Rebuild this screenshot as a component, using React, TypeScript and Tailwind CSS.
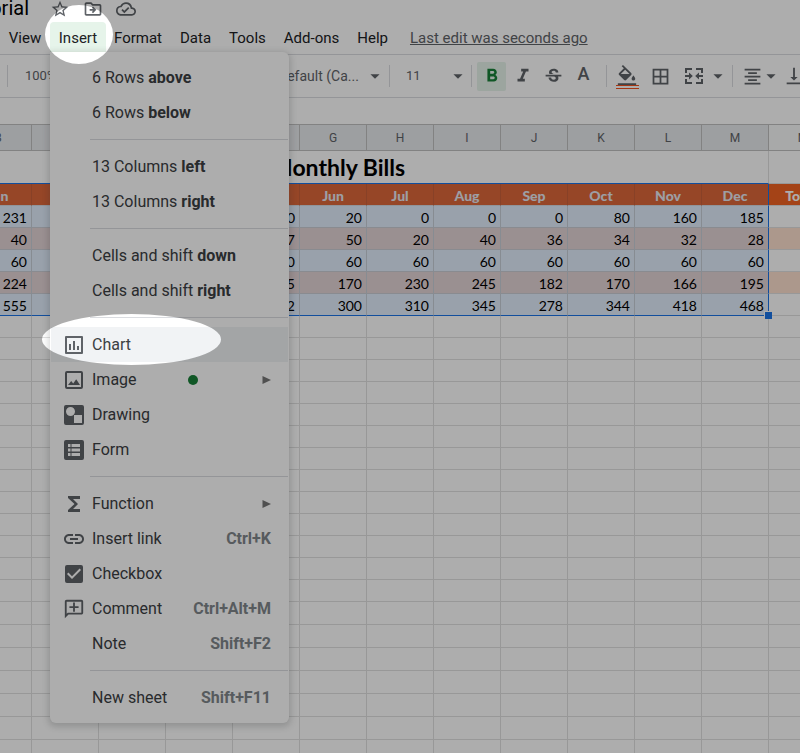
import type { ReactNode } from "react";
import {
  MdArrowDropDown,
  MdBorderAll,
  MdCheckBox,
  MdFormatAlignCenter,
  MdFormatBold,
  MdFormatColorFill,
  MdFormatItalic,
  MdFunctions,
  MdLink,
  MdOutlineAddComment,
  MdOutlineCloudDone,
  MdOutlineDriveFileMove,
  MdStarBorder,
  MdStrikethroughS,
  MdVerticalAlignBottom,
} from "react-icons/md";

/* ---------- icons ---------- */

function ChartIcon() {
  return (
    <svg viewBox="0 0 24 24" className="size-6" fill="currentColor" aria-hidden="true">
      <path
        fillRule="evenodd"
        d="M4 3h16a1 1 0 0 1 1 1v16a1 1 0 0 1-1 1H4a1 1 0 0 1-1-1V4a1 1 0 0 1 1-1zm1 2v14h14V5z"
      />
      <path d="M7 11h2v6H7zM11 8h2v9h-2zM15 13h2v4h-2z" />
    </svg>
  );
}

function ImageIcon() {
  return (
    <svg viewBox="0 0 24 24" className="size-6" fill="currentColor" aria-hidden="true">
      <path
        fillRule="evenodd"
        d="M5 3h14a2 2 0 0 1 2 2v14a2 2 0 0 1-2 2H5a2 2 0 0 1-2-2V5a2 2 0 0 1 2-2zm0 2v14h14V5z"
      />
      <path d="M6 17l3.200-4 2 2.400 3-4.200L18 17z" />
    </svg>
  );
}

function DrawingIcon() {
  return (
    <svg viewBox="0 0 24 24" className="size-6" fill="currentColor" aria-hidden="true">
      <path
        fillRule="evenodd"
        d="M4 2h16a2 2 0 0 1 2 2v16a2 2 0 0 1-2 2H4a2 2 0 0 1-2-2V4a2 2 0 0 1 2-2zM8.500 4a4.500 4.500 0 1 0 0 9 4.500 4.500 0 0 0 0-9zM12 12v8h8v-8z"
      />
    </svg>
  );
}

function FormIcon() {
  return (
    <svg viewBox="0 0 24 24" className="size-6" fill="currentColor" aria-hidden="true">
      <path
        fillRule="evenodd"
        d="M4 2h16a2 2 0 0 1 2 2v16a2 2 0 0 1-2 2H4a2 2 0 0 1-2-2V4a2 2 0 0 1 2-2zM6 6v3h2.500V6zM9.500 6v3H18V6zM6 10.500v3h2.500v-3zM9.500 10.500v3H18v-3zM6 15v3h2.500v-3zM9.500 15v3H18v-3z"
      />
    </svg>
  );
}

function MergeIcon() {
  return (
    <svg viewBox="0 0 20 18" className="h-[18px] w-5" fill="currentColor" aria-hidden="true">
      <path d="M1 1h7v2H3v3H1zM12 1h7v5h-2V3h-5zM1 12h2v3h5v2H1zM17 12h2v5h-7v-2h5z" />
      <path d="M1 8h4V5.500L8.800 9 5 12.500V10H1zM19 8h-4V5.500L11.200 9l3.800 3.500V10h4z" />
    </svg>
  );
}

/* ---------- toolbar ---------- */

function Divider({ className = "" }: { className?: string }) {
  return <span className={`h-[22px] w-px shrink-0 bg-[#dadce0] ${className}`} />;
}

function ToolButton({
  label,
  active,
  className = "",
  children,
}: {
  label: string;
  active?: boolean;
  className?: string;
  children: ReactNode;
}) {
  return (
    <button
      type="button"
      aria-label={label}
      aria-pressed={active}
      className={`flex h-[29px] shrink-0 items-center justify-center rounded-xs ${
        active ? "bg-[#e6f4ea] text-[#188038]" : ""
      } ${className}`}
    >
      {children}
    </button>
  );
}

function Picker({
  label,
  value,
  className = "",
  textClass,
}: {
  label: string;
  value: string;
  className?: string;
  textClass: string;
}) {
  return (
    <label className={`grid shrink-0 items-center ${className}`}>
      <select
        aria-label={label}
        defaultValue={value}
        className={`col-start-1 row-start-1 h-7 w-full appearance-none bg-transparent ${textClass}`}
      >
        <option>{value}</option>
      </select>
      <MdArrowDropDown className="pointer-events-none col-start-1 row-start-1 -mr-1 size-[22px] justify-self-end" />
    </label>
  );
}

function Toolbar() {
  return (
    <div className="flex h-11 items-center overflow-hidden border-y border-[#dadce0] pl-[7px] text-[#5f6368]">
      <Divider />
      <Picker label="Zoom" value="100%" className="ml-[17px] w-[50px]" textClass="text-[13px]" />
      <Picker label="Font" value="Default (Ca..." className="ml-[203px] w-[104px]" textClass="text-sm" />
      <Divider className="ml-[7px]" />
      <Picker label="Font size" value="11" className="ml-4 w-[59px]" textClass="text-[13px]" />
      <Divider className="ml-[6px]" />
      <ToolButton label="Bold" active className="ml-[5px] w-[29px]">
        <MdFormatBold className="size-[22px]" />
      </ToolButton>
      <ToolButton label="Italic" className="ml-[2px] w-[30px]">
        <MdFormatItalic className="size-[22px]" />
      </ToolButton>
      <ToolButton label="Strikethrough" className="w-[30px]">
        <MdStrikethroughS className="size-[21px]" />
      </ToolButton>
      <ToolButton label="Text color" className="w-[31px]">
        <span className="pb-1 text-lg leading-5 font-medium">A</span>
      </ToolButton>
      <Divider className="ml-[7px]" />
      <ToolButton label="Fill color" className="ml-[5px] w-[30px] flex-col">
        <MdFormatColorFill className="h-[21px] w-[22px]" viewBox="0 0 24 21" />
        <span className="h-1 w-[23px] border-y border-[#f4511e]" />
      </ToolButton>
      <ToolButton label="Borders" className="ml-[3px] w-[30px]">
        <MdBorderAll className="size-[21px]" />
      </ToolButton>
      <ToolButton label="Merge cells" className="ml-1 w-[30px]">
        <MergeIcon />
      </ToolButton>
      <ToolButton label="Merge options" className="ml-[1px] w-4">
        <MdArrowDropDown className="size-[22px] shrink-0" />
      </ToolButton>
      <Divider className="ml-[6px]" />
      <ToolButton label="Horizontal align" className="ml-1 w-[30px]">
        <MdFormatAlignCenter className="size-[21px]" />
      </ToolButton>
      <ToolButton label="Align options" className="-ml-1 w-4">
        <MdArrowDropDown className="size-[22px] shrink-0" />
      </ToolButton>
      <ToolButton label="Vertical align" className="w-[30px]">
        <MdVerticalAlignBottom className="size-[22px]" />
      </ToolButton>
    </div>
  );
}

/* ---------- insert menu ---------- */

type Item = {
  text: string;
  strong?: string;
  icon?: ReactNode;
  keys?: string;
  submenu?: boolean;
  dot?: boolean;
  active?: boolean;
};

const groups: Item[][] = [
  [
    { text: "6 Rows ", strong: "above" },
    { text: "6 Rows ", strong: "below" },
  ],
  [
    { text: "13 Columns ", strong: "left" },
    { text: "13 Columns ", strong: "right" },
  ],
  [
    { text: "Cells and shift ", strong: "down" },
    { text: "Cells and shift ", strong: "right" },
  ],
  [
    { text: "Chart", icon: <ChartIcon />, active: true },
    { text: "Image", icon: <ImageIcon />, submenu: true, dot: true },
    { text: "Drawing", icon: <DrawingIcon /> },
    { text: "Form", icon: <FormIcon /> },
  ],
  [
    { text: "Function", icon: <MdFunctions className="size-6" />, submenu: true },
    { text: "Insert link", icon: <MdLink className="size-6" />, keys: "Ctrl+K" },
    { text: "Checkbox", icon: <MdCheckBox className="size-6" /> },
    {
      text: "Comment",
      icon: <MdOutlineAddComment className="size-[22px] -scale-x-100" />,
      keys: "Ctrl+Alt+M",
    },
    { text: "Note", keys: "Shift+F2" },
  ],
  [{ text: "New sheet", keys: "Shift+F11" }],
];

function MenuItem({ item }: { item: Item }) {
  return (
    <button
      type="button"
      role="menuitem"
      className={`flex h-[35px] w-full items-center gap-1.5 pr-[17px] pl-[11px] text-left ${
        item.active ? "bg-[#f1f3f5]" : ""
      }`}
    >
      <span className="flex w-6 shrink-0 justify-center text-[#5f6368]">{item.icon}</span>
      <span className={item.dot ? "w-[90px]" : ""}>
        {item.text}
        {item.strong && <b className="font-bold">{item.strong}</b>}
      </span>
      {item.dot && <span className="size-2.5 rounded-full bg-[#188038]" />}
      {item.keys && <span className="ml-auto font-bold text-[#80868b]">{item.keys}</span>}
      {item.submenu && (
        <svg viewBox="0 0 9 8" className="ml-auto h-2 w-[9px]" fill="#777" aria-hidden="true">
          <path d="M0.500 0L9 4 0.500 8z" />
        </svg>
      )}
    </button>
  );
}

function InsertMenu() {
  return (
    <div
      role="menu"
      aria-label="Insert"
      className="absolute top-full left-0 z-10 w-[239px] rounded-b-md rounded-tr-md bg-white px-px py-2 text-base text-[#3c4043] shadow-[0_2px_6px_2px_rgba(60,64,67,0.2)]"
    >
      {groups.map((group, i) => (
        <div key={i}>
          {i > 0 && <div role="separator" className="my-[9px] ml-[39px] h-px bg-[#dadce0]" />}
          {group.map((item) => (
            <MenuItem key={item.text + (item.strong ?? "")} item={item} />
          ))}
        </div>
      ))}
    </div>
  );
}

/* ---------- header ---------- */

function Header() {
  return (
    <header>
      <div className="flex h-[22px] items-start">
        <div className="flex w-[29px] shrink-0 justify-end overflow-hidden text-xl leading-4">
          <h1 className="-mt-px h-5 leading-[18px]">Tutorial</h1>
        </div>
        <div className="ml-[21px] flex items-center gap-[13px] text-[#5f6368]">
          <button type="button" aria-label="Star" className="-mt-px">
            <MdStarBorder className="size-5" />
          </button>
          <button type="button" aria-label="Move" className="-mt-px">
            <MdOutlineDriveFileMove className="size-5" />
          </button>
          <button type="button" aria-label="Document status" className="-mt-px">
            <MdOutlineCloudDone className="size-5" />
          </button>
        </div>
      </div>
      <nav className="mb-0.5 flex h-[30px] items-stretch text-[15px] whitespace-nowrap text-[#202124]">
        <button type="button" className="w-[50px] pt-0.5">View</button>
        <div className="relative flex w-14">
          <button
            type="button"
            aria-haspopup="menu"
            aria-expanded="true"
            className="w-full rounded-t-sm bg-[#e6f4ea] pt-0.5"
          >
            Insert
          </button>
          <InsertMenu />
        </div>
        <div className="flex gap-0.5 pt-0.5">
          <button type="button" className="px-2">Format</button>
          <button type="button" className="px-2">Data</button>
          <button type="button" className="px-2">Tools</button>
          <button type="button" className="px-2">Add-ons</button>
          <button type="button" className="px-2">Help</button>
          <a href="#history" className="ml-3 self-center text-[#5f6368] underline">
            Last edit was seconds ago
          </a>
        </div>
      </nav>
    </header>
  );
}

/* ---------- sheet ---------- */

const columns = ["B", "C", "D", "E", "F", "G", "H", "I", "J", "K", "L", "M", "N"];
const months = ["Jan", "", "", "", "", "Jun", "Jul", "Aug", "Sep", "Oct", "Nov", "Dec"];
const bills: (number | string)[][] = [
  [231, "", "", "", 0, 20, 0, 0, 0, 80, 160, 185],
  [40, "", "", "", 37, 50, 20, 40, 36, 34, 32, 28],
  [60, "", "", "", 60, 60, 60, 60, 60, 60, 60, 60],
  [224, "", "", "", 195, 170, 230, 245, 182, 170, 166, 195],
  [555, "", "", "", 292, 300, 310, 345, 278, 344, 418, 468],
];
const emptyRows = Array.from({ length: 20 }, (_, i) => (i < 13 ? "h-[22px]" : "h-[23px]"));

function Sheet() {
  return (
    <main className="overflow-hidden pt-[26px]">
      <table className="-ml-[35px] w-[871px] table-fixed border-separate border-spacing-0 font-[Lato,Carlito,sans-serif] text-sm leading-[19px]">
        <thead>
          <tr className="h-[27px] font-[Roboto,sans-serif] text-xs text-[#5f6368]">
            {columns.map((c) => (
              <th
                key={c}
                scope="col"
                className={`border-y border-r border-[#c0c0c0] p-0 font-normal ${c === "N" ? "bg-[#f8f9fa]" : "bg-[#e8eaed]"}`}
              >
                {c}
              </th>
            ))}
          </tr>
        </thead>
        <tbody>
          <tr className="h-[33px]">
            <td
              colSpan={12}
              className="border-r border-b border-r-[#e0e0e0] border-b-[#1a73e8] p-0 pl-[306px] text-[23px] leading-6 font-bold text-black"
            >
              Monthly Bills
            </td>
            <td className="border-b border-[#e0e0e0] p-0" />
          </tr>
          <tr className="h-[22px] text-white">
            {months.map((m, c) => (
              <th
                key={c}
                scope="col"
                className={`border-r border-b border-b-[#d5dae2] bg-[#dd673a] p-0 pt-0.5 font-black text-[#e8eaf2] ${
                  c === 11 ? "border-r-[#1a73e8]" : "border-r-[#c9603a]"
                }`}
              >
                {m}
              </th>
            ))}
            <td className="border-b border-[#e0e0e0] bg-[#f26422] p-0 pt-0.5 pr-1 text-center font-black">Total</td>
          </tr>
          {bills.map((row, r) => {
            const last = r === bills.length - 1;
            return (
              <tr key={r} className="h-[22px]">
                {row.map((v, c) => (
                  <td
                    key={c}
                    className={`relative border-r border-b p-0 pt-0.5 pr-1 text-right text-black ${
                      r % 2 ? "bg-[#e4d4d6]" : "bg-[#e2eefd]"
                    } ${c === 11 ? "border-r-[#1a73e8]" : "border-r-[#c8ced8]"} ${
                      last ? "border-b-[#1a73e8]" : "border-b-[#cbcdd5]"
                    }`}
                  >
                    {v}
                    {last && c === 11 && (
                      <span className="absolute -right-1 -bottom-1 size-2 border-t border-l border-white bg-[#1a73e8]" />
                    )}
                  </td>
                ))}
                <td className={`border-b border-[#e0e0e0] p-0 ${r % 2 ? "bg-[#fee0cf]" : ""}`} />
              </tr>
            );
          })}
          {emptyRows.map((height, r) => (
            <tr key={r} className={height}>
              {columns.map((c) => (
                <td key={c} className="border-r border-b border-[#e0e0e0] p-0" />
              ))}
            </tr>
          ))}
        </tbody>
      </table>
    </main>
  );
}

/* Dimmed layer with two clear ellipses around the Insert menu and its Chart item. */
function Spotlight() {
  return (
    <svg className="pointer-events-none absolute inset-0 z-20 size-full" aria-hidden="true">
      <path
        fill="#000"
        fillOpacity="0.32"
        fillRule="evenodd"
        d="M0 0H6000V6000H0zM45 34.500a34 29.500 0 1 0 68 0a34 29.500 0 1 0-68 0zM42 339.500a89.500 25.500 0 1 0 179 0a89.500 25.500 0 1 0-179 0z"
      />
    </svg>
  );
}

export default function App() {
  return (
    <div className="relative h-screen overflow-hidden bg-white font-[Roboto,sans-serif]">
      <Header />
      <Toolbar />
      <Sheet />
      <Spotlight />
    </div>
  );
}
